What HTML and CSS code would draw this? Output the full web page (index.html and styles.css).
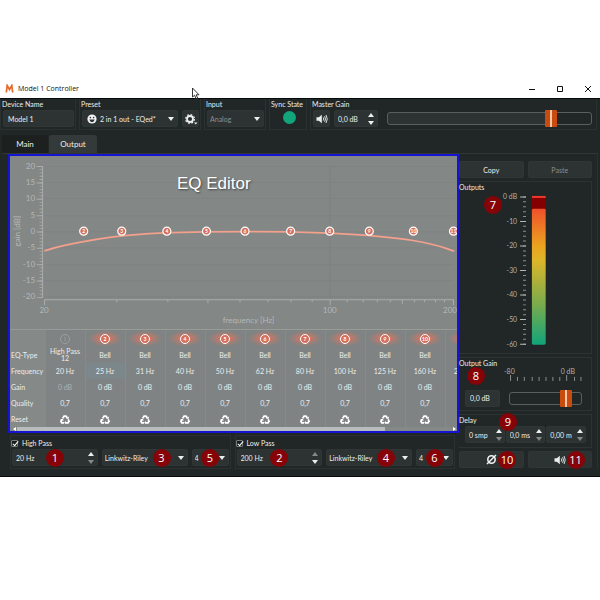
FILE: index.html
```html
<!DOCTYPE html>
<html lang="en">
<head>
<meta charset="utf-8">
<title>Model 1 Controller</title>
<link rel="stylesheet" href="styles.css">
</head>
<body>
<svg class="symbols" aria-hidden="true">
  <symbol id="down" viewBox="0 0 6 4"><path d="M0 0H6L3 4Z" fill="currentColor"/></symbol>
  <symbol id="up" viewBox="0 0 6 4"><path d="M0 4H6L3 0Z" fill="currentColor"/></symbol>
  <symbol id="speaker" viewBox="0 0 12 10">
    <path d="M0.5 3.2H2.8L5.8 0.7V9.3L2.8 6.8H0.5Z" fill="currentColor"/>
    <path d="M7.2 3.4Q8.4 5 7.2 6.6M8.6 2.2Q10.4 5 8.6 7.8M10 1Q12.5 5 10 9" fill="none" stroke="currentColor" stroke-width="0.9"/>
  </symbol>
  <symbol id="recycle" viewBox="0 0 10 9">
    <path d="M2.8 3.3L4.1 1.1H6L7.3 3M8.1 4.4L9.1 6.2L8 7.8H5.6M4 7.8H1.8L0.9 6.2L1.9 4.5" fill="none" stroke="currentColor" stroke-width="1.8"/>
    <path d="M5.8 3.3L8.6 4.1L8.9 1.4ZM6 6V9L4.1 7.700ZM0.2 4.6L2.900 3.5L3.5 6.100Z" fill="currentColor"/>
  </symbol>
</svg>

<div class="window">
  <header class="titlebar">
    <svg class="logo" viewBox="0 0 9 9"><path d="M1.300 8.500L2.200 1.500L4.500 5.500L6.800 1.500L7.700 8.500" fill="none" stroke="#e4682a" stroke-width="1.700"/></svg>
    <h1>Model 1 Controller</h1>
    <div class="window-buttons">
      <button type="button" aria-label="Minimize"><svg viewBox="0 0 8 8"><path d="M1 4.5H7" stroke="#111" fill="none"/></svg></button>
      <button type="button" aria-label="Maximize"><svg viewBox="0 0 8 8"><path d="M1.5 1.5H6.5V6.5H1.5Z" stroke="#111" fill="none"/></svg></button>
      <button type="button" aria-label="Close"><svg viewBox="0 0 8 8"><path d="M1 1L7 7M7 1L1 7" stroke="#111" fill="none"/></svg></button>
    </div>
    <svg class="cursor" viewBox="0 0 9 13"><path d="M1.5 1V10L3.6 8.2L5 11.8L6.6 11L5.2 7.8H8Z" fill="#fff" stroke="#222" stroke-width="0.9"/></svg>
  </header>

  <main class="app">
    <section class="toolbar">
      <div class="group">
        <label for="device">Device Name</label>
        <input class="field" id="device" type="text" value="Model 1">
      </div>
      <div class="group">
        <label for="preset">Preset</label>
        <div class="row">
          <div class="combo preset">
            <svg class="face" viewBox="0 0 10 10"><circle cx="5" cy="5" r="4.6" fill="#f2f2f2"/><circle cx="3.4" cy="3.6" r="0.8" fill="#2d3332"/><circle cx="6.6" cy="3.6" r="0.8" fill="#2d3332"/><path d="M2.3 5.6H7.7Q7 8.2 5 8.2T2.3 5.6Z" fill="#2d3332"/></svg>
            <select id="preset"><option>2 in 1 out - EQed*</option></select>
            <svg class="arrow"><use href="#down"/></svg>
          </div>
          <button class="btn square" type="button" aria-label="Preset settings">
            <svg class="gear" viewBox="0 0 14 12"><circle cx="6" cy="6" r="3" fill="none" stroke="#eee" stroke-width="1.8"/><circle cx="6" cy="6" r="4.4" fill="none" stroke="#eee" stroke-width="1.2" stroke-dasharray="1.8 1.656"/><path d="M10 9.500H13.500L11.750 11.500Z" fill="#eee"/></svg>
          </button>
        </div>
      </div>
      <div class="group">
        <label for="input">Input</label>
        <div class="combo muted">
          <select id="input"><option>Analog</option></select>
          <svg class="arrow"><use href="#down"/></svg>
        </div>
      </div>
      <div class="group sync">
        <span>Sync State</span>
        <i class="led"></i>
      </div>
      <div class="group master">
        <label for="master">Master Gain</label>
        <div class="row">
          <button class="btn square" type="button" aria-label="Mute"><svg class="icon"><use href="#speaker"/></svg></button>
          <div class="spin short">
            <input type="text" value="0,0 dB" aria-label="Master gain value">
            <span class="steps"><button type="button" aria-label="Up"><svg><use href="#up"/></svg></button><button type="button" aria-label="Down"><svg><use href="#down"/></svg></button></span>
          </div>
          <input class="slider" id="master" type="range" min="0" max="100" value="82">
        </div>
      </div>
    </section>

    <nav class="tabs">
      <button type="button">Main</button>
      <button type="button" class="active">Output</button>
    </nav>

    <div class="page">
      <div class="left">
        <section class="eq">
          <h2>EQ Editor</h2>
          <svg class="plot" viewBox="0 0 446 173">
            <g stroke="#7b807f" fill="none">
              <path d="M35 10.5H443M35 26.5H443M35 42.5H443M35 59.5H443M35 75.5H443M35 91.5H443M35 108.5H443M35 124.5H443M35 140.5H443M319.5 10V143" opacity=".6"/>
            </g>
            <g stroke="#a9adac" fill="none">
              <path d="M32.5 10V141"/>
              <path d="M31 10V141.5" stroke-width="3" stroke-dasharray="0.8 2.467"/>
              <path d="M29.500 10V141.500" stroke-width="6" stroke-dasharray="1 15.333"/>
              <path d="M34 143.500H443M34.500 143V149M106.500 143V146M157.500 143V146M197.500 143V147M229.500 143V146M257.500 143V146M280.500 143V146M301.500 143V146M319.500 143V149M336.500 143V146M352.500 143V146M366.500 143V146M379.500 143V146M391.500 143V148M403.500 143V146M413.500 143V146M424.500 143V146M433.500 143V146M442.500 143V149"/>
            </g>
            <g class="scale" text-anchor="end">
              <text x="25" y="13">20</text><text x="25" y="29">15</text><text x="25" y="45">10</text><text x="25" y="62">5</text><text x="25" y="78">0</text><text x="25" y="94">-5</text><text x="25" y="111">-10</text><text x="25" y="127">-15</text><text x="25" y="143">-20</text>
            </g>
            <g class="scale" text-anchor="middle">
              <text x="34" y="157">20</text><text x="319" y="157">100</text><text x="439" y="157">200</text>
              <text x="238" y="167">frequency [Hz]</text>
              <text transform="translate(10 75) rotate(-90)">gain [dB]</text>
            </g>
            <path d="M34.300 94.700C41 92.500 48 90.500 56.700 88.700S95 81.500 111.700 79.700S165 76 196.700 75.700S290 75.500 319 77S375 80 402 84.300S432 91.500 443.300 95" fill="none" stroke="#f3a08c" stroke-width="1.700"/>
            <g class="nodes">
              <g transform="translate(73.500 75)"><circle r="4"/><text y="2">2</text></g>
              <g transform="translate(111.500 75)"><circle r="4"/><text y="2">3</text></g>
              <g transform="translate(156.500 75)"><circle r="4"/><text y="2">4</text></g>
              <g transform="translate(196 75)"><circle r="4"/><text y="2">5</text></g>
              <g transform="translate(234.500 75)"><circle r="4"/><text y="2">6</text></g>
              <g transform="translate(280 75)"><circle r="4"/><text y="2">7</text></g>
              <g transform="translate(319 75)"><circle r="4"/><text y="2">8</text></g>
              <g transform="translate(358.500 75)"><circle r="4"/><text y="2">9</text></g>
              <g transform="translate(402.500 75)"><circle r="4"/><text y="2">10</text></g>
              <g transform="translate(442.500 75)"><circle r="4"/><text y="2">11</text></g>
            </g>
          </svg>
          <div class="bands">
            <table>
              <colgroup><col class="names"><col class="band" span="11"></colgroup>
              <thead>
                <tr><td></td><th class="off"><i>1</i></th><th><i>2</i></th><th><i>3</i></th><th><i>4</i></th><th><i>5</i></th><th><i>6</i></th><th><i>7</i></th><th><i>8</i></th><th><i>9</i></th><th><i>10</i></th><th><i>11</i></th></tr>
              </thead>
              <tbody>
                <tr><th>EQ-Type</th><td class="two">High Pass<br>12</td><td>Bell</td><td>Bell</td><td>Bell</td><td>Bell</td><td>Bell</td><td>Bell</td><td>Bell</td><td>Bell</td><td>Bell</td><td></td></tr>
                <tr><th>Frequency</th><td>20 Hz</td><td class="sel">25 Hz</td><td>31 Hz</td><td>40 Hz</td><td>50 Hz</td><td>62 Hz</td><td>80 Hz</td><td>100 Hz</td><td>125 Hz</td><td>160 Hz</td><td>200 Hz</td></tr>
                <tr><th>Gain</th><td class="dim">0 dB</td><td>0 dB</td><td>0 dB</td><td>0 dB</td><td>0 dB</td><td>0 dB</td><td>0 dB</td><td>0 dB</td><td>0 dB</td><td>0 dB</td><td></td></tr>
                <tr><th>Quality</th><td>0,7</td><td>0,7</td><td>0,7</td><td>0,7</td><td>0,7</td><td>0,7</td><td>0,7</td><td>0,7</td><td>0,7</td><td>0,7</td><td></td></tr>
                <tr><th>Reset</th><td><svg><use href="#recycle"/></svg></td><td><svg><use href="#recycle"/></svg></td><td><svg><use href="#recycle"/></svg></td><td><svg><use href="#recycle"/></svg></td><td><svg><use href="#recycle"/></svg></td><td><svg><use href="#recycle"/></svg></td><td><svg><use href="#recycle"/></svg></td><td><svg><use href="#recycle"/></svg></td><td><svg><use href="#recycle"/></svg></td><td><svg><use href="#recycle"/></svg></td><td></td></tr>
              </tbody>
            </table>
          </div>
          <div class="scroll"><svg viewBox="0 0 3 4"><path d="M3 0V4L0 2Z" fill="#fff"/></svg><i></i><svg viewBox="0 0 3 4"><path d="M0 0V4L3 2Z" fill="#fff"/></svg></div>
        </section>

        <div class="filters">
          <section class="filter">
            <label class="check"><input type="checkbox" checked>High Pass</label>
            <div class="row">
              <div class="spin">
                <input type="text" value="20 Hz" aria-label="High pass frequency">
                <span class="steps"><button type="button" aria-label="Up"><svg><use href="#up"/></svg></button><button type="button" aria-label="Down"><svg class="faint"><use href="#down"/></svg></button></span>
                <b class="badge mid">1</b>
              </div>
              <div class="combo">
                <select aria-label="High pass type"><option>Linkwitz-Riley</option></select>
                <svg class="arrow"><use href="#down"/></svg>
                <b class="badge type">3</b>
              </div>
              <div class="combo order">
                <select aria-label="High pass order"><option>4</option></select>
                <svg class="arrow"><use href="#down"/></svg>
                <b class="badge mid">5</b>
              </div>
            </div>
          </section>
          <section class="filter">
            <label class="check"><input type="checkbox" checked>Low Pass</label>
            <div class="row">
              <div class="spin">
                <input type="text" value="200 Hz" aria-label="Low pass frequency">
                <span class="steps"><button type="button" aria-label="Up"><svg class="faint"><use href="#up"/></svg></button><button type="button" aria-label="Down"><svg><use href="#down"/></svg></button></span>
                <b class="badge mid">2</b>
              </div>
              <div class="combo">
                <select aria-label="Low pass type"><option>Linkwitz-Riley</option></select>
                <svg class="arrow"><use href="#down"/></svg>
                <b class="badge type">4</b>
              </div>
              <div class="combo order">
                <select aria-label="Low pass order"><option>4</option></select>
                <svg class="arrow"><use href="#down"/></svg>
                <b class="badge mid">6</b>
              </div>
            </div>
          </section>
        </div>
      </div>

      <aside class="right">
        <div class="pair">
          <button class="btn" type="button">Copy</button>
          <button class="btn off" type="button">Paste</button>
        </div>
        <section class="panel outputs">
          <h3>Outputs</h3>
          <b class="badge seven">7</b>
          <svg class="meter" viewBox="0 0 132 158">
            <defs><linearGradient id="level" x1="0" y1="0" x2="0" y2="1"><stop offset="0" stop-color="#f0502a"/><stop offset=".28" stop-color="#eaa51f"/><stop offset=".38" stop-color="#dcb62a"/><stop offset=".7" stop-color="#7aab4c"/><stop offset="1" stop-color="#12a47a"/></linearGradient></defs>
            <path d="M65.500 4.500V155" stroke="#8c9190" stroke-width="3" stroke-dasharray="1 3.983"/>
            <path d="M64 4.500V155" stroke="#b4b8b7" stroke-width="6" stroke-dasharray="1 23.917"/>
            <g class="marks" text-anchor="end"><text x="58" y="7">0 dB</text><text x="58" y="32">-10</text><text x="58" y="57">-20</text><text x="58" y="82">-30</text><text x="58" y="107">-40</text><text x="58" y="132">-50</text><text x="58" y="157">-60</text></g>
            <rect x="73" y="4" width="14" height="20" fill="#840000"/>
            <rect x="73" y="4" width="14" height="2" fill="#ee3a2e"/>
            <rect x="73" y="17" width="14" height="138" rx="1.500" fill="url(#level)"/>
          </svg>
        </section>
        <section class="panel gain">
          <h3>Output Gain</h3>
          <b class="badge eight">8</b>
          <div class="row">
            <input class="field" type="text" value="0,0 dB" aria-label="Output gain value">
            <div class="scaled">
              <div class="ends"><span>-80</span><span>0 dB</span></div>
              <svg class="ticks" viewBox="0 0 74 6"><path d="M1.500 0V6M8.500 2V6M15.500 2V6M23.500 2V6M30.500 2V6M37.500 2V6M44.500 2V6M51.500 2V6M58.500 0V6M66.500 2V6M73 2V6" stroke="#8c9190" fill="none"/></svg>
              <input class="slider empty" type="range" min="0" max="100" value="85" aria-label="Output gain">
            </div>
          </div>
        </section>
        <section class="panel delay">
          <h3>Delay</h3>
          <b class="badge nine">9</b>
          <div class="row">
            <div class="spin"><input type="text" value="0 smp" aria-label="Delay in samples"><span class="steps"><button type="button" aria-label="Up"><svg><use href="#up"/></svg></button><button type="button" aria-label="Down"><svg class="faint"><use href="#down"/></svg></button></span></div>
            <div class="spin"><input type="text" value="0,0 ms" aria-label="Delay in milliseconds"><span class="steps"><button type="button" aria-label="Up"><svg><use href="#up"/></svg></button><button type="button" aria-label="Down"><svg class="faint"><use href="#down"/></svg></button></span></div>
            <div class="spin"><input type="text" value="0,00 m" aria-label="Delay in meters"><span class="steps"><button type="button" aria-label="Up"><svg><use href="#up"/></svg></button><button type="button" aria-label="Down"><svg class="faint"><use href="#down"/></svg></button></span></div>
          </div>
        </section>
        <div class="pair last">
          <button class="btn" type="button" aria-label="Invert phase"><svg class="phase" viewBox="0 0 11 11"><circle cx="5.500" cy="5.500" r="3.700" fill="none" stroke="#f2f2f2" stroke-width="1.600"/><path d="M1 10L10 1" stroke="#f2f2f2" stroke-width="1.400"/></svg><b class="badge end">10</b></button>
          <button class="btn" type="button" aria-label="Mute output"><svg class="icon"><use href="#speaker"/></svg><b class="badge end">11</b></button>
        </div>
      </aside>
    </div>
  </main>
</div>
</body>
</html>
```
FILE: styles.css
```css
* { box-sizing: border-box; }
body {
  margin: 0;
  padding-top: 78px;
  background: #fff;
  color: #eceeed;
  font: 7px/10px Lato, "Open Sans", sans-serif;
}
h1, h2, h3 { margin: 0; font: inherit; }
button, input, select { font: inherit; color: inherit; margin: 0; padding: 0; border: 0; background: none; min-width: 0; }
svg { display: block; flex: none; }
.symbols { position: absolute; width: 0; height: 0; }

.titlebar { position: relative; display: flex; align-items: center; height: 20px; padding: 1px 8px 0 5px; color: #111; }
.logo { width: 9px; height: 9px; margin-right: 4px; }
.titlebar h1 { flex: 1; font-family: "Open Sans", sans-serif; }
.window-buttons { display: flex; gap: 20px; }
.window-buttons svg { width: 8px; height: 8px; }
.window-buttons button { display: block; }
.cursor { position: absolute; left: 191px; top: 9px; width: 9px; height: 13px; z-index: 2; }

.app { background: #212726; border: solid #080b0b; border-width: 1px 0; padding-bottom: 7px; }
.row { display: flex; gap: 4px; }
.row > * { min-width: 0; }

.toolbar { display: grid; grid-template-columns: 76px 122px 62px 38px 1fr; gap: 3px; padding-right: 3px; }
.group { border: 1px solid #2b3130; border-top: 0; height: 31px; padding: 0 1px 2px 2px; white-space: nowrap; }
.group > label, .group > span { display: block; height: 11px; margin-left: -1px; }
.field, .spin, .combo, .btn { height: 17px; border: 1px solid #303635; border-radius: 2px; background: #2d3332; }
.field { display: block; width: 100%; padding: 0 4px; }
.spin, .combo { position: relative; display: flex; align-items: center; flex: 1; padding: 0 3px; }
.spin input { width: 100%; flex: 1; }
select { appearance: none; width: 100%; flex: 1; outline: 0; }
.combo select { margin-left: -1px; }
.arrow { width: 6px; height: 4px; color: #eee; }
.combo.preset { padding-left: 4px; }
.face { width: 10px; height: 10px; margin-right: 4px; }
.muted { color: #8b908f; }
.btn { position: relative; display: flex; align-items: center; justify-content: center; flex: 1; }
.square { flex: 0 0 17px; }
.gear { width: 14px; height: 12px; }
.icon { width: 12px; height: 10px; }
.steps { display: grid; gap: 4px; }
.steps button { display: block; }
.steps svg { width: 6px; height: 4px; color: #eee; }
.steps .faint { color: #858a89; }
.sync { padding-right: 0; }
.led { display: block; width: 13px; height: 13px; margin: 1px auto; border-radius: 50%; background: #12a47a; }
.short { flex: 0 0 44px; }
.master .row { align-items: center; }

.slider { appearance: none; flex: 1; width: 100%; height: 17px; }
.master .slider { margin: 0 3px 0 5px; }
.slider::-webkit-slider-runnable-track { height: 13px; border: 1px solid #5a5f5e; border-radius: 3px; background: linear-gradient(90deg, #2d3332 80%, #212726 80%); }
.empty::-webkit-slider-runnable-track { background: #212726; }
.slider::-webkit-slider-thumb { appearance: none; width: 12px; height: 17px; margin-top: -3px; border-radius: 1px; background: linear-gradient(90deg, #c94b0e 5px, #f6c7a9 5px 7px, #c94b0e 7px); }

.tabs { display: flex; gap: 1px; padding: 5px 2px 0; font-size: 8px; }
.tabs button { width: 46px; height: 18px; border-radius: 3px 3px 0 0; background: #1c2120; }
.tabs .active { width: 48px; background: #343a39; }

.page { display: flex; margin: 0 2px; padding-left: 6px; border-top: 1px solid #303635; }
.left { flex: 1; min-width: 0; }
.eq { position: relative; border: 2px solid #1414d2; background: #838786; overflow: hidden; }
.eq h2 { position: absolute; z-index: 1; left: 167px; top: 18px; font: 17px/20px "Liberation Sans", Arial, sans-serif; color: #fff; text-shadow: 1px 1px 2px #444; }
.plot { width: 100%; }
.scale { fill: #b4b8b7; font-size: 8px; }
.nodes circle { fill: #d5705f; stroke: #fff; stroke-width: 1.2; }
.nodes text { fill: #fff; font-size: 5px; font-weight: 700; text-anchor: middle; }

.bands { overflow: hidden; border-top: 1px solid #969a99; }
table { table-layout: fixed; width: 475px; border-collapse: collapse; background: #7f8383; }
.names { width: 35px; }
.band { width: 40px; }
tr { height: 16px; }
th, td { padding: 0; height: 16px; font-weight: 400; text-align: center; white-space: nowrap; line-height: 8px; border-left: 1px solid #868a89; }
tbody th { text-align: left; padding-left: 1px; border: 0; background: #858988; }
thead td { border: 0; background: #858988; }
thead th { height: 17px; background: radial-gradient(ellipse 17px 8px, #f0735a, #c0786a 40%, #9c7f78 65%, #7f838300); }
thead i { display: block; width: 10px; height: 10px; margin: 0 auto; border: 1px solid #fff; border-radius: 50%; background: #d5705f; color: #fff; font: 700 5px/8px Lato, sans-serif; }
thead .off { background: none; }
thead .off i { border-color: #9b9f9e; background: none; color: #9b9f9e; }
.two { line-height: 7px; }
.sel { background: #7b878b; }
.dim { color: #aeb2b1; }
td svg { width: 10px; height: 9px; margin: 0 auto; color: #fff; }
.scroll { display: flex; justify-content: space-between; height: 4px; padding: 0 1px 0 3px; background: #858988; }
.scroll svg { width: 3px; height: 4px; }
.scroll i { width: 83%; margin-right: auto; margin-left: 1px; background: #b9bcbc; }

.filters { display: flex; gap: 4px; margin: 2px 4px 0 2px; }
.filter { flex: 1; min-width: 0; height: 34px; padding: 1px; border: 1px solid #2b3130; }
.check { display: flex; align-items: center; gap: 4px; height: 12px; margin-left: -1px; }
.check input { appearance: none; position: relative; width: 7px; height: 7px; border: 1px solid #777c7b; border-radius: 1px; background: #191e1d; }
.check input:checked::after { content: ""; position: absolute; left: 2px; top: -1px; width: 2px; height: 5px; border: solid #fff; border-width: 0 1px 1px 0; transform: rotate(40deg); }
.filter .order { flex: 0 0 37px; }

.badge { position: absolute; z-index: 2; width: 18px; height: 18px; border-radius: 50%; background: #860408; color: #fff; font: 11px/18px "Open Sans", sans-serif; text-align: center; }
.mid { left: 50%; top: 50%; transform: translate(-50%, -50%); }
.type { right: 16px; top: -1px; }

.right { width: 139px; padding-right: 5px; border-right: 1px solid #2b3130; }
.pair { display: flex; gap: 4px; padding-top: 7px; }
.btn.off { color: #8b908f; }
.panel { position: relative; margin-top: 3px; padding: 0 1px; border: 1px solid #2d3332; border-left: 0; }
.panel h3 { margin-left: -1px; }
.panel .row { margin-left: 5px; }
.outputs { height: 173px; }
.seven { left: 25px; top: 14px; }
.meter { width: 100%; }
.marks { fill: #aeb2b1; font-size: 7px; }
.gain { height: 54px; }
.eight { left: 8px; top: 9px; }
.gain .row { align-items: flex-end; }
.gain .field { flex: 0 0 35px; }
.scaled { flex: 1; margin: 0 8px 0 5px; }
.ends { display: flex; justify-content: space-between; height: 9px; margin: -2px 7px 0 -5px; color: #aeb2b1; }
.ticks { width: 100%; margin-bottom: 9px; }
.scaled .slider { display: block; }
.delay { height: 34px; }
.nine { left: 40px; top: -2px; }
.delay .row { gap: 1px; margin-right: 4px; padding-top: 1px; }
.delay .spin { padding: 0 2px 0 3px; }
.last { padding-top: 3px; }
.end { left: 38px; top: -1px; }
.phase { width: 11px; height: 11px; }
```
